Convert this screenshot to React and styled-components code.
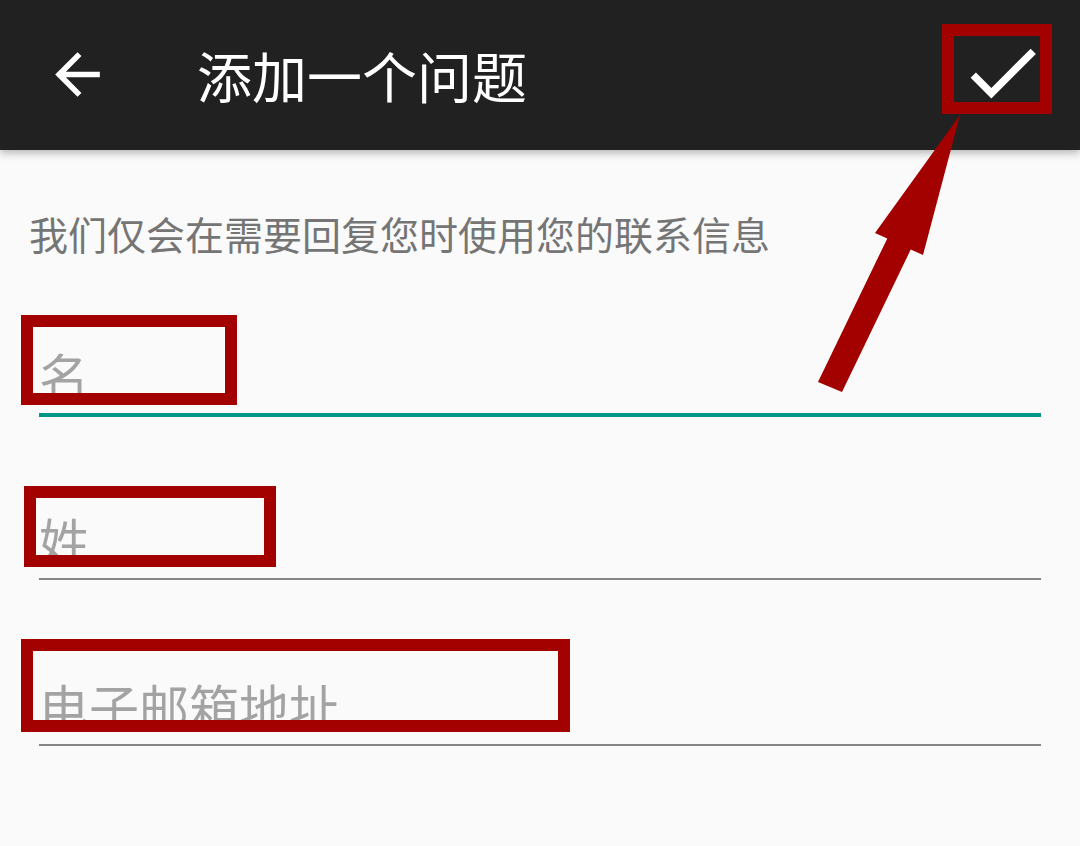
import styled, { createGlobalStyle } from "styled-components"

const GlobalStyle = createGlobalStyle`
  html, body {
    margin: 0;
    padding: 0;
    background: #fafafa;
    font-family: "Noto Sans CJK SC", "Noto Sans", sans-serif;
  }
  * {
    box-sizing: border-box;
  }
`

const RED = "#a30000"

const Page = styled.div`
  position: relative;
  width: 1080px;
  height: 846px;
  overflow: hidden;
  background: #fafafa;
`

const AppBar = styled.header`
  position: relative;
  z-index: 1;
  display: flex;
  align-items: center;
  height: 150px;
  padding: 0 33px 0 44px;
  background: #212121;
  box-shadow: 0 3px 8px rgba(0, 0, 0, 0.28);
`

const IconButton = styled.button`
  display: flex;
  align-items: center;
  justify-content: center;
  padding: 0;
  border: 0;
  background: none;
  color: #ffffff;
  margin-left: ${(p) => (p.$end ? "auto" : "0")};
  margin-top: ${(p) => p.$nudge || 0}px;

  svg {
    width: ${(p) => p.$size}px;
    height: ${(p) => p.$size}px;
    fill: currentColor;
  }
`

const Title = styled.h1`
  margin: -2px 0 0 86px;
  font-size: 55px;
  font-weight: 400;
  line-height: 1;
  color: #ffffff;
`

const Form = styled.main`
  display: flex;
  flex-direction: column;
  padding: 64px 39px 0 39px;
`

const Hint = styled.p`
  margin: 0 0 0 -10px;
  font-size: 39px;
  line-height: 1;
  color: #757575;
`

const Field = styled.label`
  display: block;
  margin-top: ${(p) => p.$gap}px;
  padding-bottom: 14px;
  border-bottom: ${(p) => (p.$focused ? "4px solid #009688" : "2px solid #858585")};
`

const Input = styled.input`
  display: block;
  width: 100%;
  height: 50px;
  padding: 0;
  border: 0;
  outline: none;
  background: transparent;
  font-family: inherit;
  font-size: 50px;
  line-height: 50px;
  color: #212121;

  &::placeholder {
    color: #a3a3a3;
  }
`

const Callout = styled.div`
  position: absolute;
  z-index: 2;
  border: 12px solid ${RED};
  pointer-events: none;
`

const ArrowLayer = styled.svg`
  position: absolute;
  z-index: 3;
  left: 0;
  top: 0;
  pointer-events: none;
`

const callouts = [
  { left: 942, top: 24, width: 110, height: 90 },
  { left: 21, top: 315, width: 216, height: 90 },
  { left: 24, top: 486, width: 252, height: 81 },
  { left: 21, top: 639, width: 549, height: 93 },
]

function App() {
  return (
    <Page>
      <GlobalStyle />
      <AppBar>
        <IconButton $size={67} $nudge={-2} aria-label="返回">
          <svg viewBox="0 0 24 24">
            <path d="M20 11H7.83l5.59-5.59L12 4l-8 8 8 8 1.41-1.41L7.83 13H20v-2z" />
          </svg>
        </IconButton>
        <Title>添加一个问题</Title>
        <IconButton $end $size={89} $nudge={-6} aria-label="完成">
          <svg viewBox="0 0 24 24">
            <path d="M9 16.17L4.83 12l-1.42 1.41L9 19 21 7l-1.41-1.41z" />
          </svg>
        </IconButton>
      </AppBar>

      <Form>
        <Hint>我们仅会在需要回复您时使用您的联系信息</Hint>
        <Field $gap={96} $focused>
          <Input placeholder="名" />
        </Field>
        <Field $gap={97}>
          <Input placeholder="姓" />
        </Field>
        <Field $gap={100}>
          <Input placeholder="电子邮箱地址" />
        </Field>
      </Form>

      {callouts.map((c, i) => (
        <Callout key={i} style={c} />
      ))}

      <ArrowLayer width="1080" height="846" viewBox="0 0 1080 846">
        <polygon
          fill={RED}
          points="960,115 923,255 910.7,249.6 842,392 818,382 887.3,238.4 875,233"
        />
      </ArrowLayer>
    </Page>
  )
}

export default App
